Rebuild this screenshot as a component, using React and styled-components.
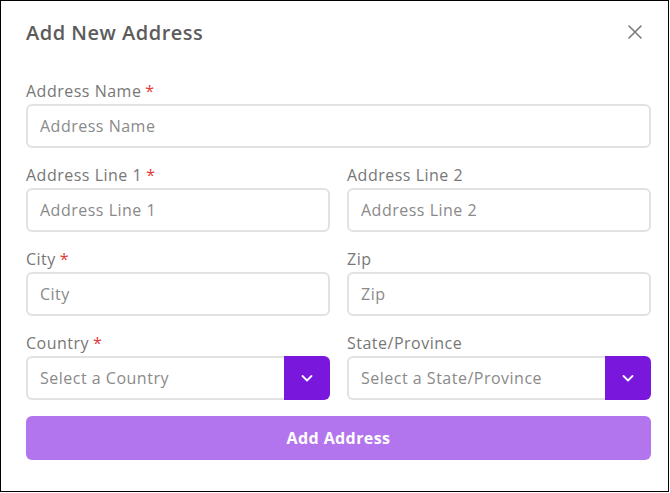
import React from "react";
import styled, { createGlobalStyle } from "styled-components";

const Global = createGlobalStyle`
  html, body { margin: 0; padding: 0; background: #fff; }
  * { box-sizing: border-box; }
  body { font-family: "Open Sans", "Noto Sans", Arial, sans-serif; }
`;

const Dialog = styled.div`
  width: 669px;
  height: 492px;
  border: 1px solid #000;
  background: #fff;
  padding: 15px 17px 0 25px;
  display: flex;
  flex-direction: column;
`;

const Header = styled.div`
  height: 32px;
  display: flex;
  align-items: center;
  justify-content: space-between;
  margin-bottom: 33px;
`;

const Title = styled.h2`
  margin: 0;
  font-size: 20px;
  font-weight: 600;
  color: #5c5c5c;
  letter-spacing: 0.5px;
`;

const Close = styled.button`
  border: 0;
  background: none;
  padding: 0;
  width: 16px;
  height: 16px;
  margin-right: 8px;
  display: flex;
  align-items: center;
  justify-content: center;
  cursor: pointer;
`;

const Form = styled.form`
  display: flex;
  flex-direction: column;
  gap: 17px;
`;

const Row = styled.div`
  display: grid;
  grid-template-columns: ${(p) => (p.$single ? "1fr" : "1fr 1fr")};
  column-gap: 17px;
`;

const Field = styled.div`
  display: flex;
  flex-direction: column;
  gap: 3px;
`;

const Label = styled.label`
  font-size: 16px;
  line-height: 20px;
  color: #777;
  letter-spacing: 0.5px;
`;

const Req = styled.span`
  color: #e53935;
  margin-left: 4px;
`;

const Input = styled.input`
  height: 44px;
  width: 100%;
  border: 2px solid #e2e2e2;
  border-radius: 6px;
  padding: 0 12px;
  font-family: inherit;
  font-size: 16px;
  letter-spacing: 0.5px;
  color: #444;
  outline: none;
  &::placeholder { color: #8a8a8a; }
`;

const SelectWrap = styled.div`
  display: flex;
  height: 44px;
`;

const SelectBox = styled.div`
  flex: 1;
  border: 2px solid #e2e2e2;
  border-right: 0;
  border-radius: 6px 0 0 6px;
  display: flex;
  align-items: center;
  padding: 0 12px;
  font-size: 16px;
  letter-spacing: 0.5px;
  color: #8a8a8a;
`;

const SelectBtn = styled.button`
  width: 46px;
  border: 0;
  background: #7a17dc;
  border-radius: 0 6px 6px 0;
  display: flex;
  align-items: center;
  justify-content: center;
  padding: 0;
  cursor: pointer;
`;

const Submit = styled.button`
  margin-top: -1px;
  height: 44px;
  width: 100%;
  border: 0;
  border-radius: 6px;
  background: #b375ed;
  color: #fff;
  font-family: inherit;
  font-size: 16px;
  font-weight: 700;
  letter-spacing: 0.4px;
  cursor: pointer;
`;

const Chevron = () => (
  <svg width="14" height="14" viewBox="0 0 14 14" fill="none">
    <path d="M2.5 5 L7 9.5 L11.5 5" stroke="#fff" strokeWidth="1.8" strokeLinecap="round" strokeLinejoin="round" />
  </svg>
);

const XIcon = () => (
  <svg width="14" height="14" viewBox="0 0 14 14" fill="none">
    <path d="M1 1 L13 13 M13 1 L1 13" stroke="#7a7a7a" strokeWidth="1.6" strokeLinecap="round" />
  </svg>
);

const TextField = ({ label, required }) => (
  <Field>
    <Label>
      {label}
      {required && <Req>*</Req>}
    </Label>
    <Input placeholder={label} />
  </Field>
);

const SelectField = ({ label, placeholder, required }) => (
  <Field>
    <Label>
      {label}
      {required && <Req>*</Req>}
    </Label>
    <SelectWrap>
      <SelectBox>{placeholder}</SelectBox>
      <SelectBtn type="button">
        <Chevron />
      </SelectBtn>
    </SelectWrap>
  </Field>
);

export default function App() {
  return (
    <>
      <Global />
      <Dialog>
        <Header>
          <Title>Add New Address</Title>
          <Close aria-label="Close">
            <XIcon />
          </Close>
        </Header>
        <Form onSubmit={(e) => e.preventDefault()}>
          <Row $single>
            <TextField label="Address Name" required />
          </Row>
          <Row>
            <TextField label="Address Line 1" required />
            <TextField label="Address Line 2" />
          </Row>
          <Row>
            <TextField label="City" required />
            <TextField label="Zip" />
          </Row>
          <Row>
            <SelectField label="Country" placeholder="Select a Country" required />
            <SelectField label="State/Province" placeholder="Select a State/Province" />
          </Row>
          <Submit type="submit">Add Address</Submit>
        </Form>
      </Dialog>
    </>
  );
}
